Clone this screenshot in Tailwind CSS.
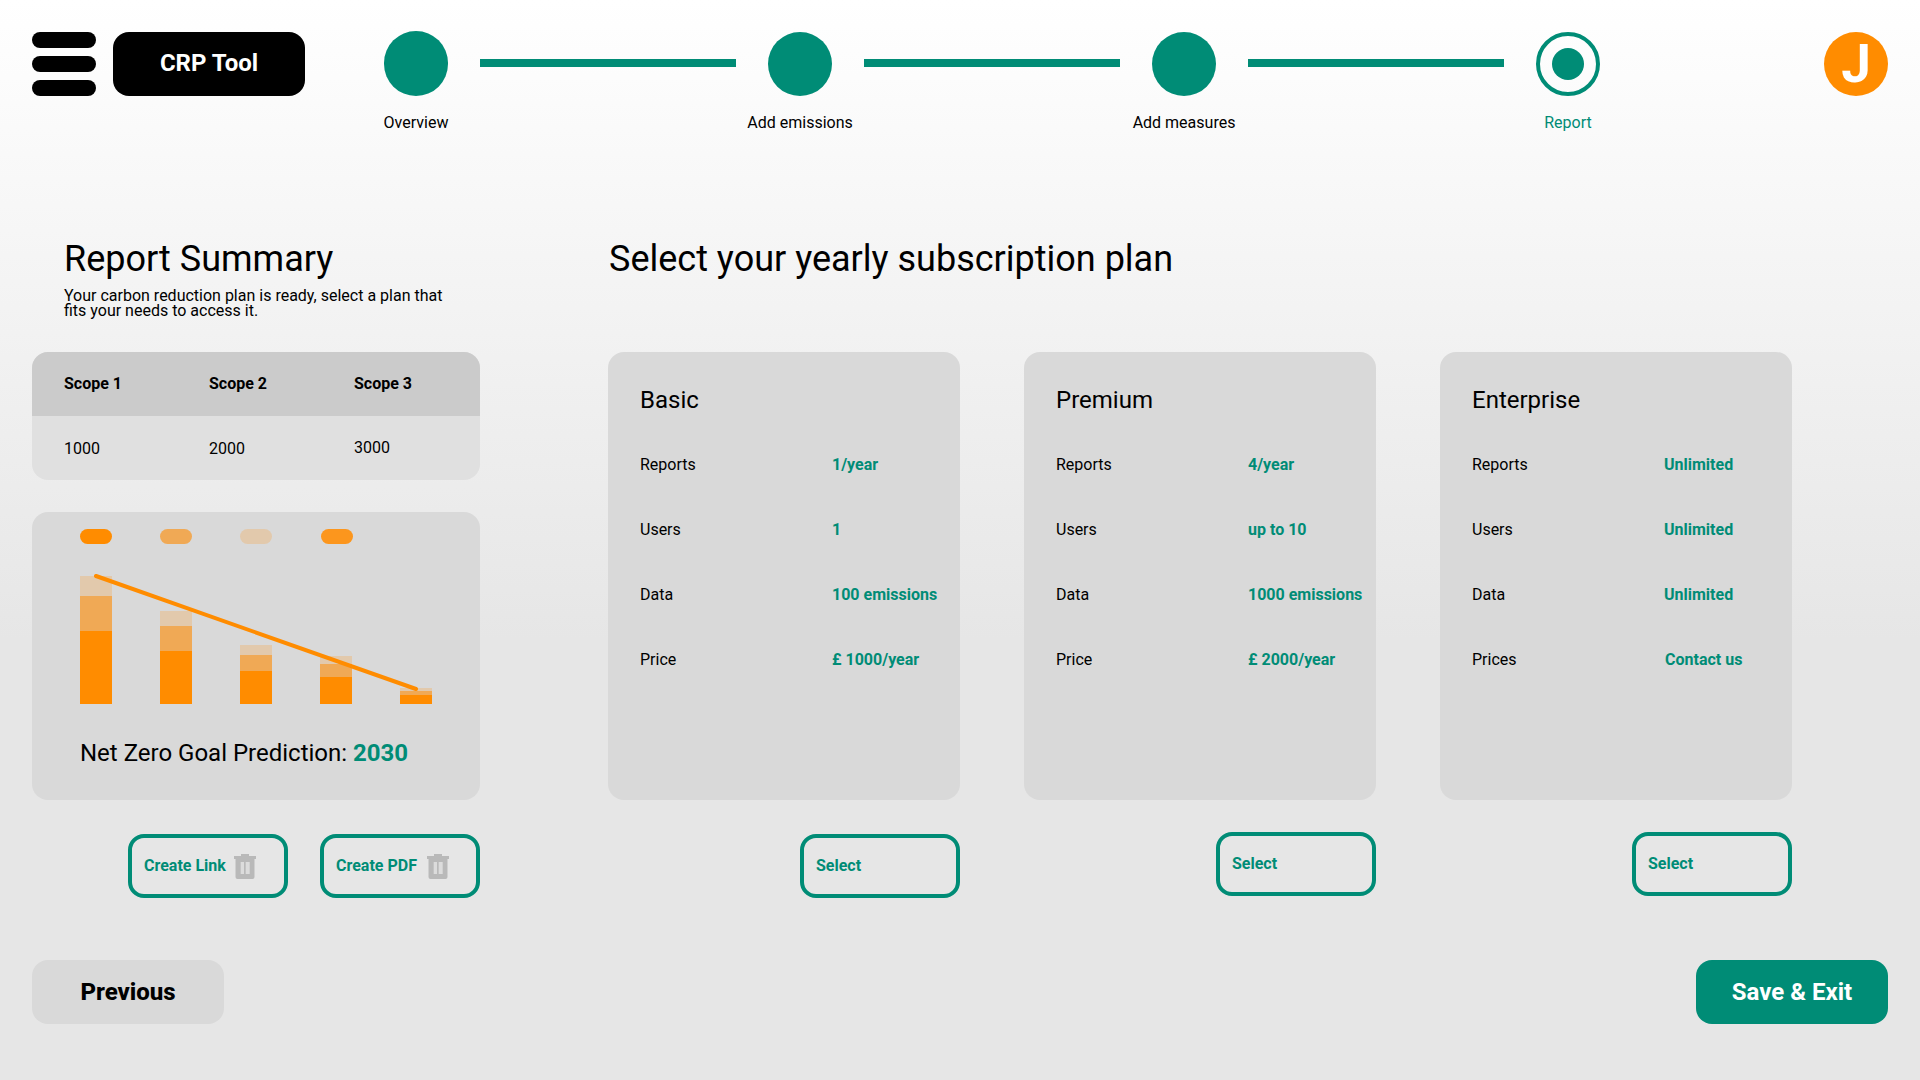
<!DOCTYPE html>
<html lang="en">
<head>
  <meta charset="UTF-8" />
  <title>CRP Tool - Report</title>
  <script src="https://cdn.jsdelivr.net/npm/@tailwindcss/browser@4"></script>
</head>
<body class="font-[Roboto,sans-serif] text-black">
  <div class="w-[1920px] h-[1080px] overflow-hidden px-8 pt-8 flex flex-col bg-[linear-gradient(to_bottom,#ffffff_0px,#e6e6e6_640px)]">

    <!-- Top bar -->
    <header class="flex items-start h-[102px]">
      <div class="w-16 h-16 flex flex-col gap-2">
        <div class="h-4 bg-black rounded-full"></div>
        <div class="h-4 bg-black rounded-full"></div>
        <div class="h-4 bg-black rounded-full"></div>
      </div>
      <div class="ml-[17px] w-48 h-16 pb-[2px] bg-black rounded-2xl text-white text-2xl font-bold flex items-center justify-center">CRP Tool</div>

      <!-- Stepper -->
      <div class="ml-[79px] flex items-start">
        <div class="w-16 flex flex-col items-center">
          <div class="w-16 h-[65px] -mt-px rounded-full bg-[#008c76]"></div>
          <span class="mt-[15px] leading-6 whitespace-nowrap">Overview</span>
        </div>
        <div class="w-64 h-2 mx-8 mt-[27px] bg-[#008c76]"></div>
        <div class="w-16 flex flex-col items-center">
          <div class="w-16 h-16 rounded-full bg-[#008c76]"></div>
          <span class="mt-[15px] leading-6 whitespace-nowrap">Add emissions</span>
        </div>
        <div class="w-64 h-2 mx-8 mt-[27px] bg-[#008c76]"></div>
        <div class="w-16 flex flex-col items-center">
          <div class="w-16 h-16 rounded-full bg-[#008c76]"></div>
          <span class="mt-[15px] leading-6 whitespace-nowrap">Add measures</span>
        </div>
        <div class="w-64 h-2 mx-8 mt-[27px] bg-[#008c76]"></div>
        <div class="w-16 flex flex-col items-center">
          <div class="w-16 h-16 rounded-full border-4 border-[#008c76] flex items-center justify-center">
            <div class="w-8 h-8 rounded-full bg-[#008c76]"></div>
          </div>
          <span class="mt-[15px] leading-6 text-[#008c76]">Report</span>
        </div>
      </div>

      <div class="ml-auto w-16 h-16 rounded-full bg-[#ff8c00] text-white text-[53px] font-bold leading-none flex items-center justify-center">J</div>
    </header>

    <main class="mt-[104px] flex">
      <!-- Report summary -->
      <section class="w-[448px] shrink-0">
        <h2 class="h-10 pl-8 pt-px text-4xl leading-10">Report Summary</h2>
        <p class="pl-8 mt-[10px] w-[420px] leading-[15px]">Your carbon reduction plan is ready, select a plan that fits your needs to access it.</p>

        <div class="mt-[34px] h-32 rounded-2xl overflow-hidden bg-[#e0e0e0]">
          <div class="h-16 pl-8 grid grid-cols-[145px_145px_145px] items-center bg-[#cbcbcb] font-bold">
            <span>Scope 1</span>
            <span>Scope 2</span>
            <span>Scope 3</span>
          </div>
          <div class="h-16 pl-8 pt-[2px] grid grid-cols-[145px_145px_145px] items-center">
            <span>1000</span>
            <span>2000</span>
            <span class="-mt-[2px]">3000</span>
          </div>
        </div>

        <div class="relative mt-8 h-72 rounded-2xl bg-[#d9d9d9] pl-12 pt-[17px]">
          <div class="flex h-4">
            <div class="w-8 h-[15px] rounded-full bg-[#ff8c00]"></div>
            <div class="w-8 h-[15px] ml-12 rounded-full bg-[#f0a955]"></div>
            <div class="w-8 h-[15px] ml-12 rounded-full bg-[#e2c9ac]"></div>
            <div class="w-8 h-[15px] ml-[49px] rounded-full bg-[#fc961d]"></div>
          </div>
          <div class="mt-[15px] h-36 flex items-end gap-12">
            <div class="w-8 flex flex-col">
              <div class="h-[20px] bg-[#e2c9ac]"></div>
              <div class="h-[35px] bg-[#f0a955]"></div>
              <div class="h-[73px] bg-[#ff8c00]"></div>
            </div>
            <div class="w-8 flex flex-col">
              <div class="h-[15px] bg-[#e2c9ac]"></div>
              <div class="h-[25px] bg-[#f0a955]"></div>
              <div class="h-[53px] bg-[#ff8c00]"></div>
            </div>
            <div class="w-8 flex flex-col">
              <div class="h-[10px] bg-[#e2c9ac]"></div>
              <div class="h-[16px] bg-[#f0a955]"></div>
              <div class="h-[33px] bg-[#ff8c00]"></div>
            </div>
            <div class="w-8 flex flex-col">
              <div class="h-[8px] bg-[#e2c9ac]"></div>
              <div class="h-[13px] bg-[#f0a955]"></div>
              <div class="h-[27px] bg-[#ff8c00]"></div>
            </div>
            <div class="w-8 flex flex-col">
              <div class="h-[3px] bg-[#e2c9ac]"></div>
              <div class="h-[4px] bg-[#f0a955]"></div>
              <div class="h-[9px] bg-[#ff8c00]"></div>
            </div>
          </div>
          <svg class="absolute left-0 top-0" width="448" height="288" fill="none">
            <line x1="64" y1="64" x2="384" y2="177" stroke="#ff8c00" stroke-width="4" stroke-linecap="round" />
          </svg>
          <p class="relative mt-[33px] text-2xl leading-8">Net Zero Goal Prediction: <b class="text-[#008c76]">2030</b></p>
        </div>

        <div class="mt-[34px] flex justify-end gap-8">
          <button class="w-40 h-16 border-4 border-[#008c76] rounded-2xl pl-3 flex items-center gap-2 text-[#008c76] font-bold">
            Create Link
            <svg width="22" height="25" viewBox="0 0 22 25"><path d="M7 0h8v2h7v3H0V2h7zM1.500 5h19v18a2 2 0 0 1-2 2h-15a2 2 0 0 1-2-2z" fill="#b9b9b9" /><path d="M6.700 8h3.300v12H6.700zM11.700 8h4v12h-4z" fill="#dcdcdc" /></svg>
          </button>
          <button class="w-40 h-16 border-4 border-[#008c76] rounded-2xl pl-3 flex items-center gap-2.5 text-[#008c76] font-bold">
            Create PDF
            <svg width="22" height="25" viewBox="0 0 22 25"><path d="M7 0h8v2h7v3H0V2h7zM1.500 5h19v18a2 2 0 0 1-2 2h-15a2 2 0 0 1-2-2z" fill="#b9b9b9" /><path d="M6.700 8h3.300v12H6.700zM11.700 8h4v12h-4z" fill="#dcdcdc" /></svg>
          </button>
        </div>
      </section>

      <!-- Plans -->
      <section class="ml-32 flex-1">
        <h2 class="h-10 pl-px pt-px text-4xl leading-10">Select your yearly subscription plan</h2>
        <div class="mt-[74px] grid grid-cols-[352px_352px_352px] gap-x-16">
          <div>
            <div class="h-[448px] rounded-2xl bg-[#d9d9d9] pl-8 pt-8">
              <h3 class="text-2xl leading-8 mb-4">Basic</h3>
              <div class="h-[65px] flex items-center"><span class="w-48">Reports</span><b class="text-[#008c76]">1/year</b></div>
              <div class="h-[65px] flex items-center"><span class="w-48">Users</span><b class="text-[#008c76]">1</b></div>
              <div class="h-[65px] flex items-center"><span class="w-48">Data</span><b class="text-[#008c76]">100 emissions</b></div>
              <div class="h-[65px] flex items-center"><span class="w-48">Price</span><b class="text-[#008c76]">£ 1000/year</b></div>
            </div>
            <div class="mt-[34px] flex justify-end">
              <button class="w-40 h-16 border-4 border-[#008c76] rounded-2xl pl-3 text-left text-[#008c76] font-bold">Select</button>
            </div>
          </div>
          <div>
            <div class="h-[448px] rounded-2xl bg-[#d9d9d9] pl-8 pt-8">
              <h3 class="text-2xl leading-8 mb-4">Premium</h3>
              <div class="h-[65px] flex items-center"><span class="w-48">Reports</span><b class="text-[#008c76]">4/year</b></div>
              <div class="h-[65px] flex items-center"><span class="w-48">Users</span><b class="text-[#008c76]">up to 10</b></div>
              <div class="h-[65px] flex items-center"><span class="w-48">Data</span><b class="text-[#008c76]">1000 emissions</b></div>
              <div class="h-[65px] flex items-center"><span class="w-48">Price</span><b class="text-[#008c76]">£ 2000/year</b></div>
            </div>
            <div class="mt-8 flex justify-end">
              <button class="w-40 h-16 border-4 border-[#008c76] rounded-2xl pl-3 text-left text-[#008c76] font-bold">Select</button>
            </div>
          </div>
          <div>
            <div class="h-[448px] rounded-2xl bg-[#d9d9d9] pl-8 pt-8">
              <h3 class="text-2xl leading-8 mb-4">Enterprise</h3>
              <div class="h-[65px] flex items-center"><span class="w-48">Reports</span><b class="text-[#008c76]">Unlimited</b></div>
              <div class="h-[65px] flex items-center"><span class="w-48">Users</span><b class="text-[#008c76]">Unlimited</b></div>
              <div class="h-[65px] flex items-center"><span class="w-48">Data</span><b class="text-[#008c76]">Unlimited</b></div>
              <div class="h-[65px] flex items-center"><span class="w-48">Prices</span><b class="ml-px text-[#008c76]">Contact us</b></div>
            </div>
            <div class="mt-8 flex justify-end">
              <button class="w-40 h-16 border-4 border-[#008c76] rounded-2xl pl-3 text-left text-[#008c76] font-bold">Select</button>
            </div>
          </div>
        </div>
      </section>
    </main>

    <!-- Footer buttons -->
    <footer class="mt-[62px] flex justify-between">
      <button class="w-48 h-16 rounded-2xl bg-[#d9d9d9] text-2xl font-extrabold">Previous</button>
      <button class="w-48 h-16 rounded-2xl bg-[#008c76] text-white text-2xl font-bold">Save &amp; Exit</button>
    </footer>
  </div>
</body>
</html>
